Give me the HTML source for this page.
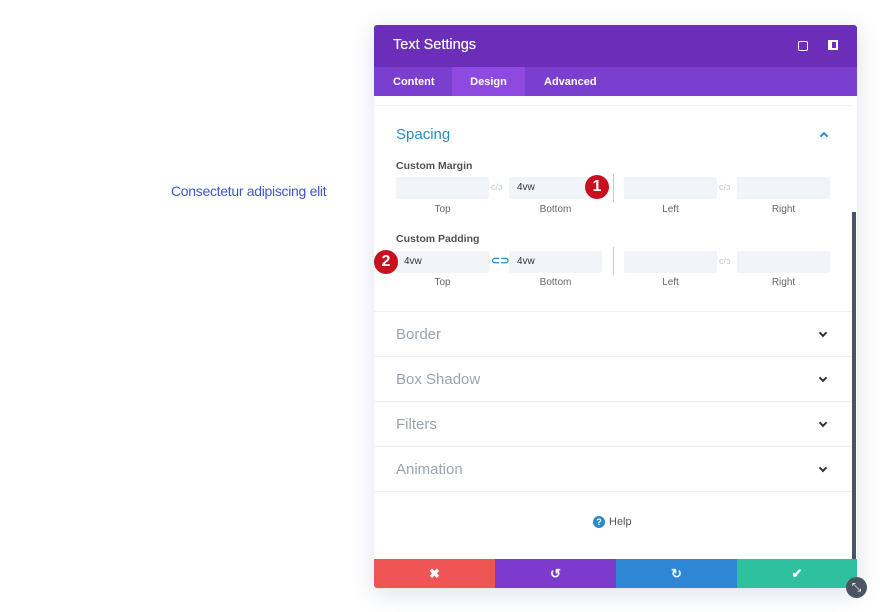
<!DOCTYPE html>
<html><head><style>
*{margin:0;padding:0;box-sizing:border-box}
body{width:880px;height:612px;background:#fff;font-family:"Liberation Sans",sans-serif;position:relative;overflow:hidden}
.a{position:absolute}
.modal{left:374px;top:25px;width:483px;height:563px;background:#fff;box-shadow:0 5px 25px rgba(60,90,160,.18);border-radius:3px;overflow:hidden}
.hdr{left:0;top:0;width:483px;height:42px;background:#6c2eb9;color:#fff;font-size:14.5px;font-weight:normal;padding:12px 19px;text-shadow:0 0 0.4px #fff}
.tabs{left:0;top:42px;width:483px;height:29px;background:#7b3fcf}
.tab{top:1px;height:29px;color:#fff;font-size:11px;font-weight:bold;line-height:29px}
.fld{height:22px;background:#f1f4f8;border-radius:2px;font-size:10px;color:#333;line-height:22px;padding-left:8px}
.lbl{font-size:10px;color:#666;text-align:center;width:93px}
.cap{font-size:10.5px;color:#333;font-weight:bold;opacity:.85}
.sec{left:0;width:478px;height:45px;border-top:1px solid #eef0f3;font-size:15px;color:#9aa4b0;padding:14px 22px}
.chev{position:absolute;right:26px;top:18px;width:6px;height:6px;border-right:2px solid #333;border-bottom:2px solid #333;transform:rotate(45deg)}
.lnk{font-size:9px;color:#c2c8d0}
.btn{top:534px;height:29px;width:121px;color:#fff;text-align:center;line-height:29px;font-size:13px;font-weight:bold}
.badge{width:24px;height:24px;border-radius:50%;background:#c8101e;color:#fff;font-weight:bold;font-size:16px;text-align:center;line-height:24px}
</style></head><body>
<div class="a" style="left:171px;top:183px;font-size:14px;color:#3b58c9;letter-spacing:-0.3px">Consectetur adipiscing elit</div>
<div class="a modal">
 <div class="a hdr">Text Settings
  <div class="a" style="left:424px;top:16px;width:10px;height:10px;border:1.5px solid #fff;border-radius:2px"></div>
  <div class="a" style="left:454px;top:15px;width:10px;height:10px;border:2px solid #fff;border-left-width:4px"></div>
 </div>
 <div class="a tabs">
  <div class="a tab" style="left:19px">Content</div>
  <div class="a tab" style="left:78px;width:73px;top:0;background:#8e4ae0;text-align:center;line-height:31px">Design</div>
  <div class="a tab" style="left:170px">Advanced</div>
 </div>
 <div class="a" style="left:0;top:80px;width:478px;border-top:1px solid #f0f2f5"></div>
 <div class="a" style="left:22px;top:101px;font-size:15px;color:#2d8ac6">Spacing</div>
 <div class="a" style="left:447px;top:108px;width:6px;height:6px;border-left:2px solid #2d8ac6;border-top:2px solid #2d8ac6;transform:rotate(45deg)"></div>
 <div class="a cap" style="left:22px;top:135px">Custom Margin</div>
 <div class="a fld" style="left:22px;top:152px;width:93px"></div>
 <div class="a lnk" style="left:117px;top:157px">c/ↄ</div>
 <div class="a fld" style="left:135px;top:152px;width:93px">4vw</div>
 <div class="a" style="left:239px;top:149px;width:1px;height:28px;background:#ccc"></div>
 <div class="a fld" style="left:250px;top:152px;width:93px"></div>
 <div class="a lnk" style="left:345px;top:157px">c/ↄ</div>
 <div class="a fld" style="left:363px;top:152px;width:93px"></div>
 <div class="a lbl" style="left:22px;top:179px">Top</div>
 <div class="a lbl" style="left:135px;top:179px">Bottom</div>
 <div class="a lbl" style="left:250px;top:179px">Left</div>
 <div class="a lbl" style="left:363px;top:179px">Right</div>
 <div class="a badge" style="left:211px;top:150px">1</div>

 <div class="a cap" style="left:22px;top:208px">Custom Padding</div>
 <div class="a fld" style="left:22px;top:226px;width:93px">4vw</div>
 <div class="a" style="left:117px;top:229px;font-size:11px;color:#2d8ac6;font-weight:bold">⊂⊃</div>
 <div class="a fld" style="left:135px;top:226px;width:93px">4vw</div>
 <div class="a" style="left:239px;top:222px;width:1px;height:28px;background:#ccc"></div>
 <div class="a fld" style="left:250px;top:226px;width:93px"></div>
 <div class="a lnk" style="left:345px;top:231px">c/ↄ</div>
 <div class="a fld" style="left:363px;top:226px;width:93px"></div>
 <div class="a lbl" style="left:22px;top:252px">Top</div>
 <div class="a lbl" style="left:135px;top:252px">Bottom</div>
 <div class="a lbl" style="left:250px;top:252px">Left</div>
 <div class="a lbl" style="left:363px;top:252px">Right</div>
 <div class="a badge" style="left:0;top:225px">2</div>

 <div class="a sec" style="top:286px">Border<span class="chev"></span></div>
 <div class="a sec" style="top:331px">Box Shadow<span class="chev"></span></div>
 <div class="a sec" style="top:376px">Filters<span class="chev"></span></div>
 <div class="a sec" style="top:421px">Animation<span class="chev"></span></div>
 <div class="a" style="left:0;top:466px;width:478px;border-top:1px solid #eef0f3"></div>
 <div class="a" style="left:219px;top:491px;width:12px;height:12px;border-radius:50%;background:#2d8ac6;color:#fff;font-size:9px;font-weight:bold;text-align:center;line-height:12px">?</div>
 <div class="a" style="left:235px;top:491px;font-size:11px;color:#555">Help</div>
 <div class="a" style="left:478px;top:187px;width:4px;height:347px;background:#4a5563"></div>
 <div class="a btn" style="left:0;background:#ef5555">✖</div>
 <div class="a btn" style="left:121px;background:#7d3bcd">↺</div>
 <div class="a btn" style="left:242px;background:#2e86d5">↻</div>
 <div class="a btn" style="left:363px;width:120px;background:#2fc0a0">✔</div>
</div>
<div class="a" style="left:846px;top:577px;width:21px;height:21px;border-radius:50%;background:#4a5563;color:#fff;font-size:12px;text-align:center;line-height:21px">⤡</div>
</body></html>
